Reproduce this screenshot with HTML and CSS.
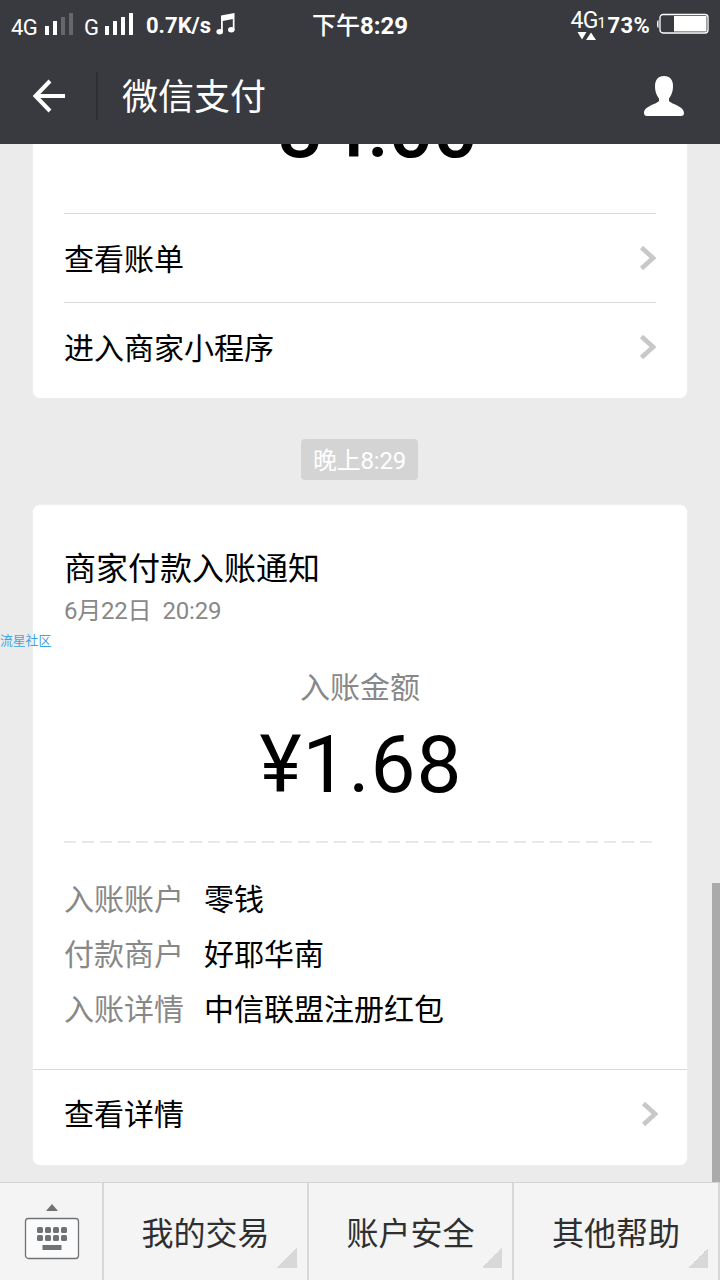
FILE: index.html
```
<!DOCTYPE html>
<html lang="zh-CN">
<head>
<meta charset="utf-8">
<title>微信支付</title>
<link rel="stylesheet" href="styles.css">
</head>
<body>
<div class="screen">
  <div class="status">
    <div class="status-left">
      <span class="net net-4g">4G</span>
      <svg class="bars" width="29" height="23" viewBox="0 0 29 23"><path fill="#fff" d="M0 13h4v9H0zM8 8h4v14H8z"/><path fill="#66676b" d="M16 4h4v18h-4zM24 0h4v22h-4z"/></svg>
      <span class="net net-g">G</span>
      <svg class="bars" width="29" height="23" viewBox="0 0 29 23"><path fill="#fff" d="M0 13h4v9H0zM8 8h4v14H8zM16 4h4v18h-4zM24 0h4v22h-4z"/></svg>
      <span class="speed">0.7K/s</span>
      <svg class="note" width="20" height="22" viewBox="0 0 20 22"><path d="M5 2.5 18.5 0v17h-1.700V6L6.800 8v11H5z" fill="#fff"/><ellipse cx="3.700" cy="18.700" rx="3.300" ry="2.700" fill="#fff"/><ellipse cx="15.300" cy="16.700" rx="3.300" ry="2.700" fill="#fff"/></svg>
    </div>
    <div class="clock"><span class="clock-cn">下午</span><b>8:29</b></div>
    <div class="status-right">
      <div class="data"><div class="data-label">4G<small>1</small></div><svg class="data-arrows" width="20" height="8" viewBox="0 0 20 8"><path fill="#fff" d="M0.500 0h9L5 7.500zM9 8h10L14 0.500z"/></svg></div>
      <b class="percent">73%</b>
      <svg class="battery" width="53" height="22" viewBox="0 0 53 22"><path d="M2.500 7Q1 7 1 11t1.500 4z" fill="#fff"/><rect x="4" y="1.500" width="48" height="18.500" rx="3" fill="none" stroke="#fff" stroke-width="1.300"/><path d="M18 3h32.500v15.500H18z" fill="#fff"/></svg>
    </div>
  </div>

  <header class="header">
    <svg class="back" width="34" height="34" viewBox="0 0 34 34" fill="none" stroke="#fff" stroke-width="4"><path d="M18 2 3.500 17 18 32M4 17h29"/></svg>
    <h1 class="title"><span>微信支付</span></h1>
    <svg class="person" width="42" height="42" viewBox="0 0 42 42"><path fill="#fff" d="M21 1C15 1 12 5 12 11c0 6 2 10 4 12.500v2.500C14 29 1 31 1 38q0 3 3 3h34q3 0 3-3c0-7-13-9-15-12v-2.500C28 21 30 17 30 11 30 5 27 1 21 1z"/></svg>
  </header>

  <main class="chat">
    <section class="card card-top">
      <div class="spent">-34.00</div>
      <div class="link"><span>查看账单</span><svg class="chevron" width="18" height="26" viewBox="0 0 18 26"><path d="M3.500 2.500 15 13 3.500 23.500"/></svg></div>
      <div class="link"><span>进入商家小程序</span><svg class="chevron" width="18" height="26" viewBox="0 0 18 26"><path d="M3.500 2.500 15 13 3.500 23.500"/></svg></div>
    </section>

    <div class="time">晚上8:29</div>

    <section class="card card-notice">
      <div class="notice-body">
        <h2 class="notice-title">商家付款入账通知</h2>
        <div class="date">6月22日&nbsp; 20:29</div>
        <div class="amount-label">入账金额</div>
        <div class="amount">¥1.68</div>
        <div class="dash"></div>
        <dl class="details">
          <dt>入账账户</dt><dd>零钱</dd>
          <dt>付款商户</dt><dd>好耶华南</dd>
          <dt>入账详情</dt><dd>中信联盟注册红包</dd>
        </dl>
      </div>
      <div class="more"><span>查看详情</span><svg class="chevron" width="18" height="26" viewBox="0 0 18 26"><path d="M3.500 2.500 15 13 3.500 23.500"/></svg></div>
    </section>
    <div class="watermark">流星社区</div>
    <div class="scrollbar"></div>
  </main>

  <nav class="menu">
    <div class="keyboard">
      <svg width="56" height="58" viewBox="0 0 56 58"><path fill="#6f7275" d="M28 1 34 8H22z"/><rect x="1.500" y="15.500" width="53" height="40" rx="3" fill="#fbfbfb" stroke="#707376" stroke-width="1.300"/><g fill="#707376"><rect x="13" y="24" width="6" height="6" rx="1.500"/><rect x="21" y="24" width="6" height="6" rx="1.500"/><rect x="29" y="24" width="6" height="6" rx="1.500"/><rect x="37" y="24" width="6" height="6" rx="1.500"/><rect x="13" y="32" width="6" height="6" rx="1.500"/><rect x="21" y="32" width="6" height="6" rx="1.500"/><rect x="29" y="32" width="6" height="6" rx="1.500"/><rect x="37" y="32" width="6" height="6" rx="1.500"/><rect x="18.500" y="42" width="19" height="5"/></g></svg>
    </div>
    <div class="tab">我的交易</div>
    <div class="tab">账户安全</div>
    <div class="tab">其他帮助</div>
  </nav>
</div>
</body>
</html>
```
FILE: styles.css
```
* { box-sizing: border-box; margin: 0; padding: 0; }
body { background: #ebebeb; font-family: Roboto, "Noto Sans CJK SC", sans-serif; color: #000; }
svg { display: block; flex: none; }
.screen { width: 720px; height: 1280px; display: flex; flex-direction: column; overflow: hidden; }

.status { height: 50px; background: #393a3f; color: #fff; display: grid; grid-template-columns: 1fr auto 1fr; padding: 0 11px; line-height: 30px; white-space: nowrap; }
.status-left { display: flex; align-items: flex-start; }
.net { font-size: 22px; margin-top: 13px; }
.net-4g { width: 34px; letter-spacing: -0.5px; }
.net-g { width: 14px; margin: 13px 7px 0 10px; }
.bars { margin-top: 13px; }
.speed { font-size: 22px; font-weight: 700; margin: 11px 0 0 12px; width: 70px; }
.note { margin-top: 13px; }
.clock { font-size: 24px; line-height: 30px; padding-top: 11px; }
.clock-cn { font-weight: 500; }
.status-right { display: flex; justify-content: flex-end; align-items: flex-start; }
.data { width: 37px; padding-top: 9px; }
.data-label { font-size: 23px; line-height: 24px; letter-spacing: -0.8px; }
.data-label small { font-size: 15px; }
.data-arrows { margin: -3px 0 0 6px; }
.percent { font-size: 22px; margin-top: 11px; letter-spacing: 0.3px; }
.battery { margin: 13px 0 0 6px; }

.header { height: 94px; background: #393a3f; color: #fff; display: flex; align-items: center; padding: 0 35px 0 32px; }
.back { margin-right: 30px; margin-bottom: 2px; }
.title { font-size: 36px; line-height: 44px; height: 48px; padding-top: 4px; font-weight: 400; border-left: 2px solid #2e2f33; padding-left: 24px; flex: 1; margin-bottom: 2px; }
.person { margin-bottom: 2px; }

.chat { position: relative; height: 1038px; overflow: hidden; padding: 0 32px; display: flex; flex-direction: column; align-items: center; }
.card { width: 656px; background: #fff; border: 1px solid #eee; border-radius: 8px; }
.card-top { height: 255px; border-top: 0; border-radius: 0 0 8px 8px; padding: 0 31px; overflow: hidden; flex: none; }
.spent { font-size: 79px; line-height: 80px; font-weight: 500; text-align: center; margin-top: -54px; height: 123px; padding-left: 9px; letter-spacing: -0.4px; }
.link { height: 89px; border-top: 1px solid #d9d9d9; display: flex; align-items: center; justify-content: space-between; font-size: 30px; }
.link span { margin-bottom: 3px; }
.chevron { fill: none; stroke: #c7c8ca; stroke-width: 4.6; }
.time { margin: 40px 1px 0 0; height: 41px; width: 117px; border-radius: 4px; background: #d4d4d4; color: #fff; font-size: 24px; line-height: 44px; letter-spacing: -0.2px; text-align: center; flex: none; }
.card-notice { margin-top: 24px; height: 662px; flex: none; }
.notice-body { height: 565px; padding: 41px 31px 0; border-bottom: 1px solid #d9d9d9; }
.notice-title { font-size: 32px; font-weight: 400; line-height: 46px; }
.date { color: #888; font-size: 24px; line-height: 38px; letter-spacing: -0.25px; }
.amount-label { color: #888; font-size: 30px; line-height: 44px; text-align: center; margin-top: 36px; }
.amount { font-size: 80px; line-height: 94px; text-align: center; margin-top: 8px; letter-spacing: 1px; padding-left: 2px; }
.dash { height: 2px; margin-top: 29px; width: 588px; background: repeating-linear-gradient(90deg, #e8e8e8 0 12px, transparent 12px 18px); }
.details { display: grid; grid-template-columns: 140px 1fr; font-size: 30px; line-height: 55px; margin-top: 29px; }
.details dt { color: #888; }
.more { height: 95px; padding: 0 29px 8px 31px; display: flex; align-items: center; justify-content: space-between; font-size: 30px; }
.more span { margin-bottom: 3px; }
.watermark { position: absolute; left: 0; top: 488px; color: #3da4e8; font-size: 12.8px; line-height: 18px; }
.scrollbar { position: absolute; right: 0; top: 739px; width: 8px; height: 299px; background: #aaa; }

.menu { height: 98px; background: #f4f4f4; border-top: 1px solid #d3d3d3; display: grid; grid-template-columns: 104px 205px 205px 206px; }
.keyboard { display: flex; align-items: flex-start; padding: 20px 0 0 24px; border-right: 2px solid #d8d8d8; }
.tab { border-right: 2px solid #d8d8d8; font-size: 32px; line-height: 102px; height: 97px; text-align: center; color: #2f2f2f; background: linear-gradient(135deg, transparent 50%, #d8d8d8 50%) right 10px bottom 12px / 20px 20px no-repeat; }
```
